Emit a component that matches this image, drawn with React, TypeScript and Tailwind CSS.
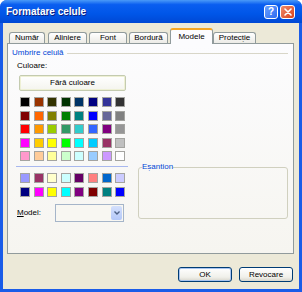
import React from 'react'

const palette = [
  ['#000000', '#993300', '#333300', '#003300', '#003366', '#000080', '#333399', '#333333'],
  ['#800000', '#FF6600', '#808000', '#008000', '#008080', '#0000FF', '#666699', '#808080'],
  ['#FF0000', '#FF9900', '#99CC00', '#339966', '#33CCCC', '#3366FF', '#800080', '#969696'],
  ['#FF00FF', '#FFCC00', '#FFFF00', '#00FF00', '#00FFFF', '#00CCFF', '#993366', '#C0C0C0'],
  ['#FF99CC', '#FFCC99', '#FFFF99', '#CCFFCC', '#CCFFFF', '#99CCFF', '#CC99FF', '#FFFFFF'],
]

const chartColors = [
  ['#9999FF', '#993366', '#FFFFCC', '#CCFFFF', '#660066', '#FF8080', '#0066CC', '#CCCCFF'],
  ['#000080', '#FF00FF', '#FFFF00', '#00FFFF', '#800080', '#800000', '#008080', '#0000FF'],
]

const tabs = [
  { label: 'Număr', w: 'w-[36px]', ml: 'ml-0' },
  { label: 'Aliniere', w: 'w-[39px]', ml: 'ml-[3px]' },
  { label: 'Font', w: 'w-[38px]', ml: 'ml-[2px]' },
  { label: 'Bordură', w: 'w-[39px]', ml: 'ml-[2px]' },
]

function SwatchGrid({ rows }: { rows: string[][] }) {
  return (
    <div className="grid grid-cols-[repeat(8,10px)] gap-x-[3.6px] gap-y-[3.5px]">
      {rows.flat().map((c, i) => (
        <div key={i} className="h-[10px] w-[10px] border border-[#a4a4a0]" style={{ backgroundColor: c }} />
      ))}
    </div>
  )
}

function XpButton({ label, isDefault }: { label: string; isDefault?: boolean }) {
  return (
    <div
      className={`flex h-[15px] w-[54px] items-center justify-center rounded-[3px] border border-[#003c74] bg-[linear-gradient(to_bottom,#ffffff,#f0f0ea_70%,#d8d6cc)] text-[8px] text-black ${
        isDefault ? 'shadow-[inset_0_0_0_1px_#a8c4f0]' : ''
      }`}
    >
      {label}
    </div>
  )
}

export default function App() {
  return (
    <div className="h-[292px] w-[302px] font-['Liberation_Sans',Arial,sans-serif]">
      <div className="flex h-full w-full flex-col rounded-t-[7px] bg-[#1a5ce8]">
        {/* Title bar */}
        <div className="flex h-[23px] shrink-0 items-center rounded-t-[7px] bg-[linear-gradient(to_bottom,#4a9af8_0%,#0a5ef0_20%,#0056e8_60%,#0048d4_100%)] pl-[6px] pr-[7px]">
          <span className="flex-1 text-[10px] font-bold text-white [text-shadow:1px_1px_0_#0a1f80]">Formatare celule</span>
          <div className="flex items-center gap-[2px]">
            <div className="flex h-[14px] w-[14px] items-center justify-center rounded-[3px] border border-white bg-[linear-gradient(135deg,#6aa0ff,#2d6cf0)] text-[10px] font-bold leading-none text-white">
              ?
            </div>
            <div className="flex h-[14px] w-[15px] items-center justify-center rounded-[3px] border border-white bg-[linear-gradient(135deg,#f08a6a,#d8421c)]">
              <svg width="8" height="8" viewBox="0 0 8 8">
                <path d="M1 1 L7 7 M7 1 L1 7" stroke="white" strokeWidth="1.6" strokeLinecap="round" />
              </svg>
            </div>
          </div>
        </div>

        {/* Body */}
        <div className="mx-[3px] mb-[3px] flex flex-1 flex-col bg-[#ece9d8]">
          {/* Tabs */}
          <div className="ml-[6px] flex h-[20px] items-end pt-[4px]">
            {tabs.map((t) => (
              <div
                key={t.label}
                className={`${t.w} ${t.ml} flex h-[11px] items-center justify-center rounded-t-[3px] border border-b-0 border-[#919b9c] bg-[linear-gradient(to_bottom,#ffffff,#ecebe6)] text-[8px] text-black`}
              >
                {t.label}
              </div>
            ))}
            <div className="relative z-10 ml-[2px] mb-[-1px] flex h-[16px] w-[43px] items-center justify-center rounded-t-[3px] border-x border-[#919b9c] border-t-[2px] border-t-[#f5a623] bg-[#fcfcfe] text-[8px] text-black">
              Modele
            </div>
            <div className="flex h-[11px] w-[43px] items-center justify-center rounded-t-[3px] border border-b-0 border-[#919b9c] bg-[linear-gradient(to_bottom,#ffffff,#ecebe6)] text-[8px] text-black">
              Protecție
            </div>
          </div>

          {/* Panel */}
          <div className="ml-[4px] flex h-[211px] w-[287px] flex-col border border-[#919b9c] bg-[linear-gradient(to_bottom,#fcfcfe,#f6f5f0)] px-[4px] pt-[4px]">
            <div className="flex h-[10px] items-center pr-[1px]">
              <span className="text-[8px] text-[#0046d5]">Umbrire celulă</span>
              <div className="ml-[3px] flex-1 border-t border-[#d8d6c8]" />
            </div>

            <div className="flex">
              {/* Left column */}
              <div className="ml-[5px] flex w-[115px] flex-col">
                <span className="mt-[3px] h-[10px] text-[8px] leading-[10px] text-black">Culoare:</span>
                <div className="ml-[2px] mt-[4px] flex h-[16px] w-[107px] items-center justify-center rounded-[2px] border border-[#c4cbb0] bg-[linear-gradient(to_bottom,#ffffff,#f4f4ee)] text-[8px] text-black shadow-[inset_0_0_0_1px_#eef0d4]">
                  Fără culoare
                </div>
                <div className="ml-[3px] mt-[6px]">
                  <SwatchGrid rows={palette} />
                </div>
                <div className="ml-[-1px] mt-[5px] h-[1px] w-[112px] bg-[#a8b8ee]" />
                <div className="ml-[3px] mt-[6px]">
                  <SwatchGrid rows={chartColors} />
                </div>
                <div className="mt-[7px] flex items-center">
                  <span className="w-[38px] text-[8px] text-black">
                    <span className="underline">M</span>odel:
                  </span>
                  <div className="flex h-[18px] w-[69px] items-center justify-end border border-[#a5b5c9] bg-[#f8f7f2] pr-[1px]">
                    <div className="flex h-[14px] w-[11px] items-center justify-center rounded-[2px] bg-[linear-gradient(to_bottom,#d4e0fc,#b4c8f8)]">
                      <svg width="6" height="4" viewBox="0 0 6 4">
                        <path d="M0.5 0.5 L3 3 L5.5 0.5" stroke="#4d6185" strokeWidth="1.4" fill="none" />
                      </svg>
                    </div>
                  </div>
                </div>
              </div>

              {/* Right column */}
              <div className="ml-[6px] mt-[104px]">
                <fieldset className="h-[57px] w-[150px] rounded-[3px] border border-[#d0d0bf]">
                  <legend className="ml-[3px] px-0 text-[8px] leading-[10px] text-[#0046d5]">Eșantion</legend>
                </fieldset>
              </div>
            </div>
          </div>

          {/* Buttons */}
          <div className="mt-[13px] flex justify-end gap-[7px] pr-[6px]">
            <XpButton label="OK" isDefault />
            <XpButton label="Revocare" />
          </div>
        </div>
      </div>
    </div>
  )
}
